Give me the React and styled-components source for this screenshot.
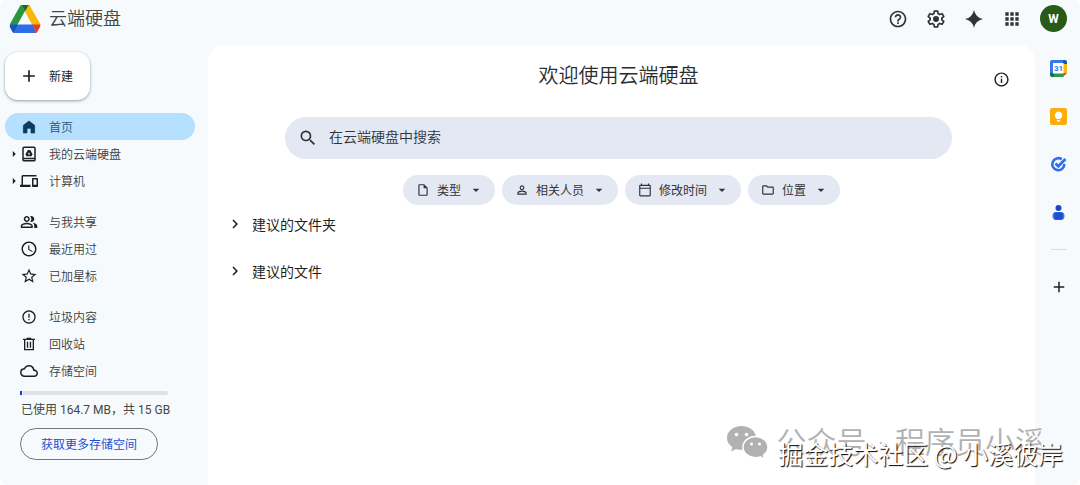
import React from "react";
import styled, { createGlobalStyle } from "styled-components";
import {
  MdHelpOutline, MdApps, MdOutlineDevices, MdOutlinePeopleAlt, MdAccessTime, MdStarBorder,
  MdErrorOutline, MdCloudQueue, MdInfoOutline, MdSearch, MdAdd, MdArrowDropDown, MdArrowRight,
  MdChevronRight, MdOutlineInsertDriveFile, MdPersonOutline, MdOutlineCalendarToday, MdOutlineFolder,
} from "react-icons/md";

const GlobalStyle = createGlobalStyle`
  *, *::before, *::after { box-sizing: border-box; }
  body {
    margin: 0;
    background: #fff;
    color: #1f1f1f;
    font-family: Roboto, "Noto Sans CJK SC", sans-serif;
    font-size: 12px;
  }
  button, input { font: inherit; color: inherit; }
  button { border: 0; padding: 0; background: none; cursor: pointer; }
  a { color: inherit; text-decoration: none; }
  svg { display: block; flex: none; }
`;

const Page = styled.div`
  position: relative;
  display: grid;
  grid-template: 45px 1fr / 208px minmax(0, 1fr) 45px;
  min-height: 100vh;
  overflow: hidden;
  border-radius: 8px;
  background: #f6fafd;
`;

const Header = styled.header`
  grid-column: 1 / -1;
  display: flex;
  align-items: center;
  justify-content: space-between;
  padding: 0 13px 8px 9px;
`;

const Brand = styled.a`
  display: flex;
  align-items: center;
  gap: 8px;
  color: #444746;
  font-size: 18px;
  font-weight: 350;
  line-height: 28px;
`;

const HeaderTools = styled.div`
  display: flex;
  align-items: center;
  gap: 18px;
  color: #303335;
`;

const IconButton = styled.button`
  display: grid;
  place-items: center;
  width: 20px;
  height: 20px;
`;

const Avatar = styled.button`
  width: 27px;
  height: 27px;
  border-radius: 50%;
  background: #285b17;
  color: #fff;
  font-size: 12px;
  font-weight: 700;
`;

const Sidebar = styled.aside`
  padding: 7px 13px 0 5px;
`;

const NewButton = styled.button`
  display: flex;
  align-items: center;
  gap: 10px;
  width: 85px;
  height: 48px;
  padding: 0 0 1px 14px;
  border-radius: 13px;
  background: #fff;
  box-shadow: 0 1px 3px rgba(60, 64, 67, 0.5);
`;

const Nav = styled.nav`
  display: flex;
  flex-direction: column;
  gap: 14px;
  padding-top: 13px;
`;

const NavGroup = styled.div`
  display: flex;
  flex-direction: column;
`;

const NavLink = styled.a`
  display: grid;
  grid-template-columns: 16px 16px 1fr;
  align-items: center;
  justify-items: center;
  height: 27px;
  border-radius: 14px;
  background: ${(p) => (p.$active ? "#b5e0ff" : "transparent")};
  color: ${(p) => (p.$active ? "#0b3a63" : "#1f1f1f")};
`;

const NavMarker = styled.span`
  display: grid;
  place-items: center;
  justify-self: end;
  width: 14px;
`;

const NavText = styled.span`
  justify-self: start;
  padding-left: 12px;
  color: ${(p) => (p.$active ? "#2a5478" : "#3a3d3f")};
  font-weight: 350;
`;

const Storage = styled.section`
  padding: 7px 0 0 15px;
`;

const Meter = styled.div`
  width: 148px;
  height: 4px;
  border-radius: 2px;
  background: #dfe2e5;
`;

const MeterFill = styled.div`
  height: 100%;
  border-right: 1px solid #f6fafd;
  background: #0b45c4;
`;

const StorageText = styled.p`
  margin: 6px 0 9px 1px;
  color: #444746;
  line-height: 18px;
  white-space: nowrap;
`;

const StorageButton = styled.button`
  width: 138px;
  height: 32px;
  padding-bottom: 1px;
  border: 1px solid #74777a;
  border-radius: 16px;
  color: #1b50d0;
`;

const Main = styled.main`
  padding: 15px 0 0;
  border-radius: 16px 16px 0 0;
  background: #fff;
`;

const Hero = styled.div`
  padding: 0 83px 0 77px;
`;

const TitleRow = styled.div`
  display: grid;
  grid-template-columns: 1fr auto 1fr;
  align-items: start;
  height: 57px;
  padding: 0 24px 0 18px;
`;

const Title = styled.h1`
  grid-column: 2;
  margin: 0;
  color: #2b2d2f;
  font-size: 20px;
  font-weight: 350;
  line-height: 32px;
`;

const InfoButton = styled(IconButton)`
  justify-self: end;
  height: 38px;
`;

const SearchBox = styled.label`
  display: flex;
  align-items: center;
  gap: 11px;
  height: 42px;
  padding: 0 13px;
  border-radius: 21px;
  background: #e4e8f3;
  color: #30343a;
`;

const SearchInput = styled.input`
  flex: 1;
  min-width: 0;
  padding: 0 0 2px;
  border: 0;
  outline: 0;
  background: none;
  font-size: 14px;
  font-weight: 350;
  &::placeholder { color: #30343a; opacity: 1; }
`;

const Chips = styled.div`
  display: flex;
  justify-content: center;
  gap: 7px;
  padding: 16px 0 4px;
`;

const Chip = styled.button`
  display: flex;
  align-items: center;
  gap: 7px;
  height: 30px;
  padding: 0 11px 1px 13px;
  border-radius: 15px;
  background: #e4e8f3;
  color: #30343a;
`;

const Sections = styled.div`
  display: flex;
  flex-direction: column;
  align-items: flex-start;
  gap: 17px;
  padding-left: 18px;
`;

const SectionToggle = styled.button`
  display: flex;
  align-items: center;
  gap: 8px;
  height: 30px;
  font-size: 14px;
`;

const Rail = styled.aside`
  display: flex;
  flex-direction: column;
  align-items: center;
  gap: 28px;
  padding: 13px 0 0 2px;
`;

const Divider = styled.hr`
  width: 16px;
  height: 1px;
  margin: -1px 0;
  border: 0;
  background: #dadee1;
`;

const SourceMark = styled.div`
  position: absolute;
  right: 35px;
  bottom: 20px;
  display: flex;
  align-items: center;
  gap: 8px;
  color: #b0b1b2;
  font-family: "DejaVu Sans", "Noto Sans CJK SC", sans-serif;
  font-size: 30px;
  font-weight: 350;
  line-height: 44px;
  white-space: nowrap;
  pointer-events: none;
`;

const CommunityMark = styled.div`
  position: absolute;
  right: 17px;
  bottom: 14px;
  color: #fff;
  font-family: "Noto Sans CJK SC", sans-serif;
  font-size: 25px;
  line-height: 36px;
  text-shadow: 1px 1px 1px #000;
  white-space: nowrap;
  pointer-events: none;
`;

const DriveLogo = () => (
  <svg width="32" height="28" viewBox="0 0 32 28" aria-hidden="true">
    <path d="M11 1Q11.500 0 12.500 0L16 6 8 20.500 1.500 21Q.500 20 1.500 18z" fill="#2a9640" />
    <path d="M12.500 0h7Q20.500 0 21 1L16 6.500z" fill="#126c37" />
    <path d="M19.500 0Q20.500 0 21 1L31 18.500Q31.500 20 31.200 20.500H23.500L16 6.500z" fill="#fcb70b" />
    <path d="M8.500 19.500H24L27 28H5z" fill="#2e6de5" />
    <path d="M1 19.500H9L5 28Q4 28 3.500 27L1 22.500Q.500 21 1 19.500z" fill="#1b52c2" />
    <path d="M23.500 19.500H31.200Q31.500 21 31 22L28.500 26.500Q28 28 27 28z" fill="#e63b2b" />
  </svg>
);

const GearIcon = () => (
  <svg width="20" height="20" viewBox="0 0 24 24" fill="none" stroke="currentColor" strokeWidth="2" strokeLinejoin="round">
    <path d="M10 2.500h4l.5 3 2 1.200 2.800-1.100 2 3.400L19 11v2l2.300 2-2 3.400-2.800-1.100-2 1.200-.5 3h-4l-.5-3-2-1.200-2.800 1.100-2-3.400L5 13v-2L2.700 9l2-3.400 2.800 1.100 2-1.200z" />
    <circle cx="12" cy="12" r="3.600" fill="currentColor" stroke="none" />
  </svg>
);

const SparkIcon = () => (
  <svg width="18" height="18" viewBox="0 0 18 18" fill="currentColor">
    <path d="M9 0Q10.500 7.500 18 9 10.500 10.500 9 18 7.500 10.500 0 9 7.500 7.500 9 0z" />
  </svg>
);

const HomeIcon = () => (
  <svg width="16" height="16" viewBox="0 0 24 24" fill="currentColor">
    <path d="M12 3 20.500 9.500V21H15v-7H9v7H3.500V9.500z" strokeLinejoin="round" stroke="currentColor" />
  </svg>
);

const MyDriveIcon = () => (
  <svg width="18" height="18" viewBox="0 0 24 24" fill="none" stroke="currentColor" strokeWidth="2">
    <rect x="4" y="3" width="16" height="18" rx="1.500" />
    <path d="M4 18h16" />
    <path d="M10.500 6.500h3l3.300 5.800-1.500 2.700H8.700l-1.500-2.700zM12 9.800l-1.500 2.700h3z" fill="currentColor" fillRule="evenodd" stroke="none" />
  </svg>
);

const TrashIcon = () => (
  <svg width="16" height="16" viewBox="0 0 24 24" fill="none" stroke="currentColor" strokeWidth="2">
    <path d="M3 5h18M8.500 3.500h7M5.500 5v15.500h13V5M9.800 8.500v9M14.200 8.500v9" />
  </svg>
);

const WeChatIcon = () => (
  <svg width="41" height="34" viewBox="0 0 41 34" aria-hidden="true">
    <path d="M14.500 0C6.500 0 0 5.300 0 12c0 3.800 2.100 7 5.400 9.200L4 25.500l5-2.600c1.800.6 3.600.9 5.500.9 8 0 14.500-5.300 14.500-12S22.500 0 14.500 0z" fill="#b0b1b2" />
    <path d="M28.500 10.500c7 0 12.500 4.700 12.500 10.700 0 3.200-1.700 6-4.500 8l1.200 4-4.500-2.300c-1.500.5-3.100.8-4.700.8-7 0-12.500-4.700-12.500-10.500s5.500-10.700 12.500-10.700z" fill="#b0b1b2" stroke="#fff" strokeWidth="1.500" />
    <g fill="#fff">
      <circle cx="9.500" cy="8.500" r="1.800" /><circle cx="19.500" cy="8.500" r="1.800" />
      <circle cx="24.500" cy="18" r="1.500" /><circle cx="32.500" cy="18" r="1.500" />
    </g>
  </svg>
);

const CalendarApp = () => (
  <svg width="17" height="17" viewBox="0 0 17 17">
    <path d="M2 0h11v4H4v9H0V2q0-2 2-2z" fill="#3478ec" />
    <path d="M13 0h2q2 0 2 2v2h-4z" fill="#1b56bd" />
    <path d="M13 4h4v9h-4z" fill="#fbb90b" />
    <path d="M4 13h9v4H4z" fill="#2c9b48" />
    <path d="M0 13h4v4H2q-2 0-2-2z" fill="#16713a" />
    <path d="M13 13h4l-4 4z" fill="#e64434" />
    <path d="M3 3h10.500v10.500H3z" fill="#fff" />
    <text x="8.500" y="11" textAnchor="middle" fill="#3478ec" fontFamily="Roboto" fontWeight="700" fontSize="8">31</text>
  </svg>
);

const KeepApp = () => (
  <svg width="17" height="17" viewBox="0 0 17 17">
    <rect width="17" height="17" rx="2" fill="#fcae0c" />
    <path d="M8.500 3.500a3.700 3.700 0 0 0-2 6.800V11h4v-.7a3.700 3.700 0 0 0-2-6.800zM7 12h3v1.500H7z" fill="#fff" />
  </svg>
);

const TasksApp = () => (
  <svg width="17" height="17" viewBox="0 0 17 17" fill="none" stroke="#2f70e8">
    <path d="M11.800 3.300A6 6 0 1 0 14.300 7.800" strokeWidth="2.600" />
    <path d="M5.500 7.500 8.300 10.300 15.500 3" strokeWidth="2.800" />
  </svg>
);

const ContactsApp = () => (
  <svg width="17" height="17" viewBox="0 0 17 17">
    <circle cx="8.500" cy="4" r="3" fill="#1747ba" />
    <path d="M2.500 12q0-4 4-4h4q4 0 4 4 0 4-4 4h-4q-4 0-4-4z" fill="#3971ed" />
    <path d="M4.500 8.500h8v7h-8z" fill="#1b51ca" />
  </svg>
);

const navGroups = [
  [
    { label: "首页", icon: <HomeIcon />, active: true },
    { label: "我的云端硬盘", icon: <MyDriveIcon />, expandable: true },
    { label: "计算机", icon: <MdOutlineDevices size={18} />, expandable: true },
  ],
  [
    { label: "与我共享", icon: <MdOutlinePeopleAlt size={18} /> },
    { label: "最近用过", icon: <MdAccessTime size={18} /> },
    { label: "已加星标", icon: <MdStarBorder size={18} /> },
  ],
  [
    { label: "垃圾内容", icon: <MdErrorOutline size={16} /> },
    { label: "回收站", icon: <TrashIcon /> },
    { label: "存储空间", icon: <MdCloudQueue size={18} /> },
  ],
];

const filters = [
  { label: "类型", icon: <MdOutlineInsertDriveFile size={14} /> },
  { label: "相关人员", icon: <MdPersonOutline size={14} /> },
  { label: "修改时间", icon: <MdOutlineCalendarToday size={14} /> },
  { label: "位置", icon: <MdOutlineFolder size={14} /> },
];

const apps = [
  { label: "日历", icon: <CalendarApp /> },
  { label: "Keep", icon: <KeepApp /> },
  { label: "Tasks", icon: <TasksApp /> },
  { label: "通讯录", icon: <ContactsApp /> },
];

export default function App() {
  return (
    <>
      <GlobalStyle />
      <Page>
        <Header>
          <Brand href="#"><DriveLogo />云端硬盘</Brand>
          <HeaderTools>
            <IconButton aria-label="帮助"><MdHelpOutline size={20} /></IconButton>
            <IconButton aria-label="设置"><GearIcon /></IconButton>
            <IconButton aria-label="Gemini"><SparkIcon /></IconButton>
            <IconButton aria-label="应用"><MdApps size={20} /></IconButton>
            <Avatar aria-label="账号">W</Avatar>
          </HeaderTools>
        </Header>

        <Sidebar>
          <NewButton><MdAdd size={20} />新建</NewButton>
          <Nav>
            {navGroups.map((group, i) => (
              <NavGroup key={i}>
                {group.map((item) => (
                  <NavLink key={item.label} href="#" $active={item.active}>
                    <NavMarker>{item.expandable && <MdArrowRight size={14} />}</NavMarker>
                    {item.icon}
                    <NavText $active={item.active}>{item.label}</NavText>
                  </NavLink>
                ))}
              </NavGroup>
            ))}
          </Nav>
          <Storage>
            <Meter role="progressbar" aria-label="存储空间" aria-valuenow={1} aria-valuemin={0} aria-valuemax={100}>
              <MeterFill style={{ width: "2%" }} />
            </Meter>
            <StorageText>已使用 164.7 MB，共 15 GB</StorageText>
            <StorageButton>获取更多存储空间</StorageButton>
          </Storage>
        </Sidebar>

        <Main>
          <TitleRow>
            <Title>欢迎使用云端硬盘</Title>
            <InfoButton aria-label="详情"><MdInfoOutline size={17} /></InfoButton>
          </TitleRow>
          <Hero>
            <SearchBox>
              <MdSearch size={20} />
              <SearchInput type="text" aria-label="搜索" placeholder="在云端硬盘中搜索" />
            </SearchBox>
          </Hero>
          <Chips>
            {filters.map((f) => (
              <Chip key={f.label}>
                {f.icon}
                {f.label}
                <MdArrowDropDown size={16} />
              </Chip>
            ))}
          </Chips>
          <Sections>
            <SectionToggle aria-expanded="false"><MdChevronRight size={18} />建议的文件夹</SectionToggle>
            <SectionToggle aria-expanded="false"><MdChevronRight size={18} />建议的文件</SectionToggle>
          </Sections>
        </Main>

        <Rail>
          {apps.map((app) => (
            <IconButton key={app.label} aria-label={app.label}>{app.icon}</IconButton>
          ))}
          <Divider />
          <IconButton aria-label="获取插件"><MdAdd size={18} /></IconButton>
        </Rail>

        <SourceMark><WeChatIcon />公众号 · 程序员小溪</SourceMark>
        <CommunityMark>掘金技术社区 @ 小溪彼岸</CommunityMark>
      </Page>
    </>
  );
}
